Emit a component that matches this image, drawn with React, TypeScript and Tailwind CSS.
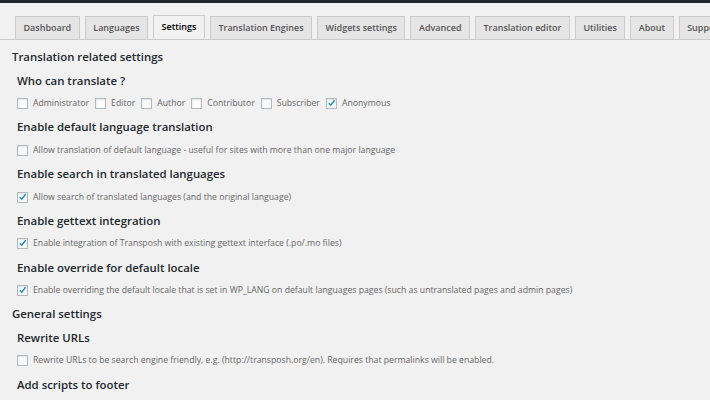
const tabs = [
  'Dashboard',
  'Languages',
  'Settings',
  'Translation Engines',
  'Widgets settings',
  'Advanced',
  'Translation editor',
  'Utilities',
  'About',
  'Support',
]

function Check({ checked }: { checked?: boolean }) {
  return (
    <span className="w-[11px] h-[11px] shrink-0 border border-[#b4b9be] bg-[#fbfbfb] shadow-[inset_0_1px_2px_rgba(0,0,0,0.1)] flex items-center justify-center">
      {checked && (
        <svg width="10" height="10" viewBox="0 0 10 10" className="-mt-[1px]">
          <path d="M2 5.2 L4.2 7.4 L8.4 2" fill="none" stroke="#1e8cbe" strokeWidth="1.6" />
        </svg>
      )}
    </span>
  )
}

function Option({ label, checked }: { label: string; checked?: boolean }) {
  return (
    <label className="flex items-center gap-[5px] text-[8.7px] text-[#666] whitespace-nowrap">
      <Check checked={checked} />
      <span>{label}</span>
    </label>
  )
}

function Row({ children, className = '' }: { children: React.ReactNode; className?: string }) {
  return <div className={`h-[23.4px] flex items-center ${className}`}>{children}</div>
}

function Heading({ children }: { children: React.ReactNode }) {
  return (
    <Row className="pl-[17px]">
      <h3 className="text-[11.4px] font-semibold text-[#23282d]">{children}</h3>
    </Row>
  )
}

export default function App() {
  return (
    <div className="w-[710px] h-[400px] overflow-hidden bg-[#f1f1f1] font-['Open_Sans',sans-serif]">
      <div className="h-[3px] bg-[#23282d]" />

      {/* tabs */}
      <div className="flex gap-[5px] pl-[15px] pt-[12px] border-b border-[#ccc] whitespace-nowrap">
        {tabs.map((t) => (
          <div
            key={t}
            className={
              t === 'Settings'
                ? 'h-[24px] px-[7.5px] -mb-px flex items-center border border-[#ccc] border-b-[#f1f1f1] bg-[#f1f1f1] text-[9px] font-semibold text-black'
                : 'h-[23px] mt-px px-[7.5px] flex items-center border border-b-0 border-[#ccc] bg-[#e5e5e5] text-[9px] font-semibold text-[#555]'
            }
          >
            {t}
          </div>
        ))}
      </div>

      <div className="mt-[5px]">
        <Row className="pl-[12px]">
          <h2 className="text-[11.4px] font-semibold text-[#23282d]">Translation related settings</h2>
        </Row>

        <Heading>Who can translate ?</Heading>
        <Row className="pl-[17px] gap-[6px]">
          <Option label="Administrator" />
          <Option label="Editor" />
          <Option label="Author" />
          <Option label="Contributor" />
          <Option label="Subscriber" />
          <Option label="Anonymous" checked />
        </Row>

        <Heading>Enable default language translation</Heading>
        <Row className="pl-[17px]">
          <Option label="Allow translation of default language - useful for sites with more than one major language" />
        </Row>

        <Heading>Enable search in translated languages</Heading>
        <Row className="pl-[17px]">
          <Option label="Allow search of translated languages (and the original language)" checked />
        </Row>

        <Heading>Enable gettext integration</Heading>
        <Row className="pl-[17px]">
          <Option label="Enable integration of Transposh with existing gettext interface (.po/.mo files)" checked />
        </Row>

        <Heading>Enable override for default locale</Heading>
        <Row className="pl-[17px]">
          <Option
            label="Enable overriding the default locale that is set in WP_LANG on default languages pages (such as untranslated pages and admin pages)"
            checked
          />
        </Row>

        <Row className="pl-[12px]">
          <h2 className="text-[11.4px] font-semibold text-[#23282d]">General settings</h2>
        </Row>

        <Heading>Rewrite URLs</Heading>
        <Row className="pl-[17px]">
          <Option label="Rewrite URLs to be search engine friendly, e.g. (http://transposh.org/en). Requires that permalinks will be enabled." />
        </Row>

        <Heading>Add scripts to footer</Heading>
      </div>
    </div>
  )
}
